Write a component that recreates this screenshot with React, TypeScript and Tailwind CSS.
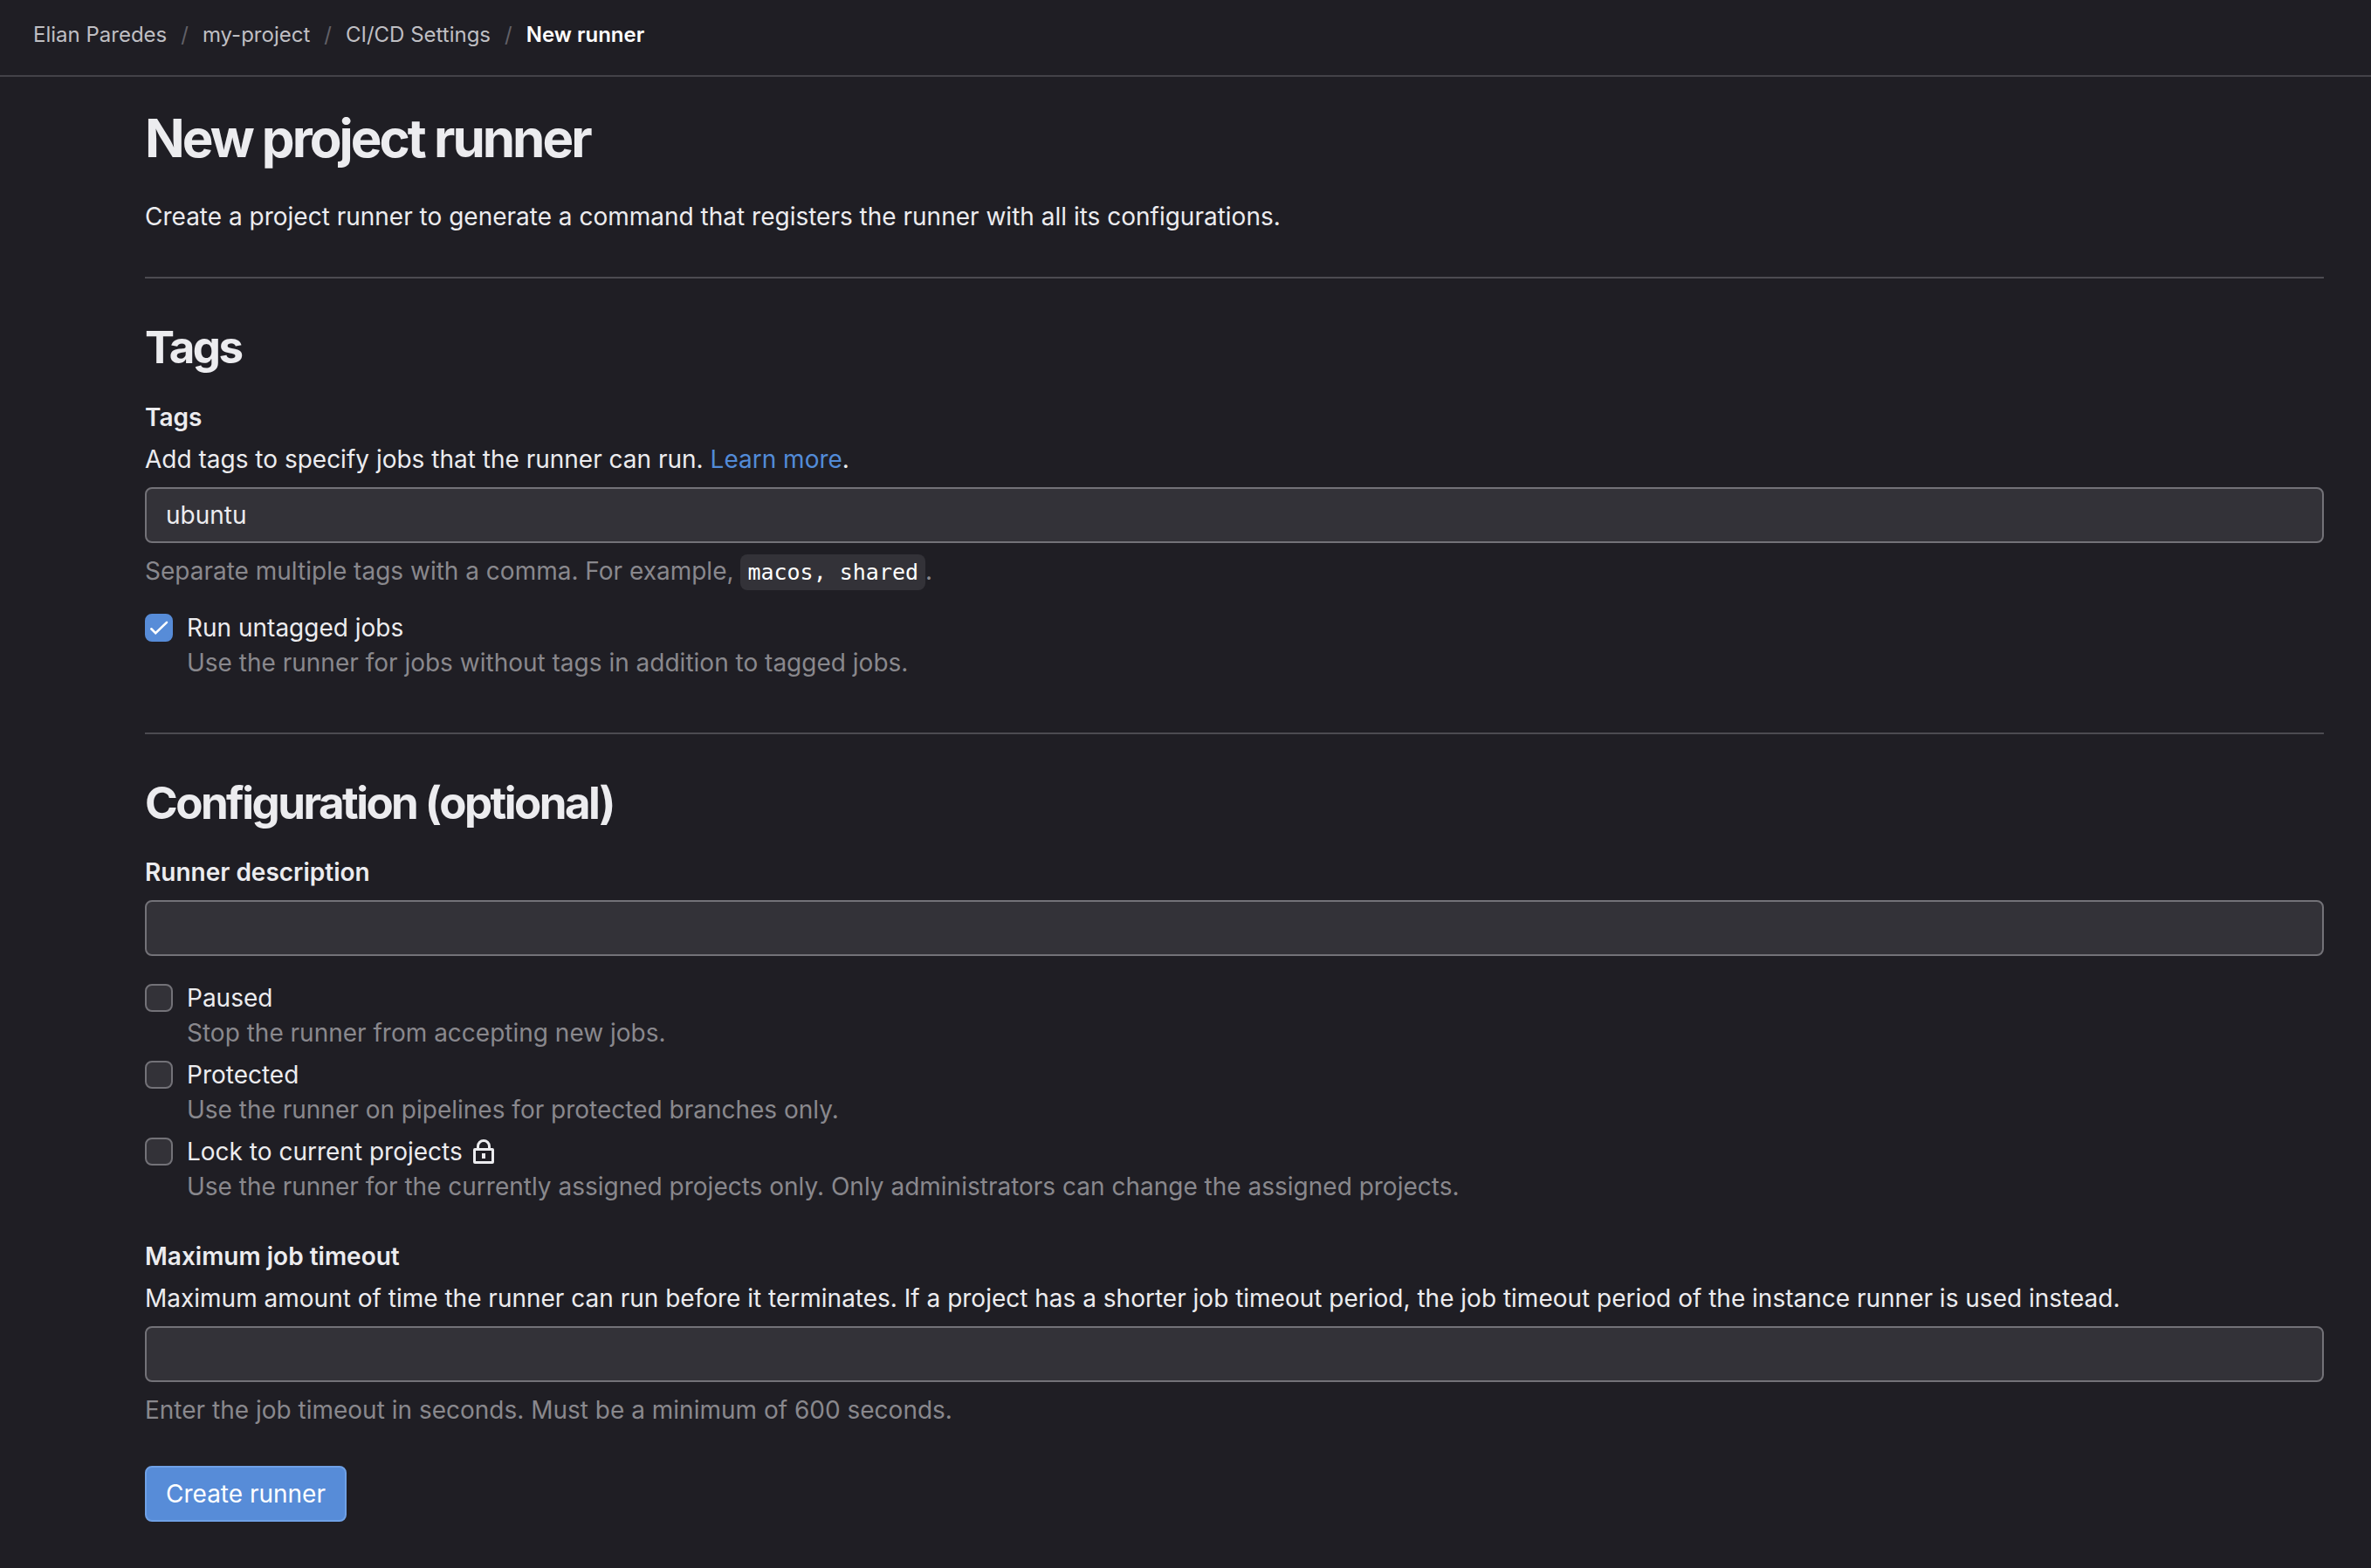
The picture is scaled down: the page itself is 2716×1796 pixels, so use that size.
import type { ReactNode } from "react";

const HINT = "text-[#89888d]";
const LABEL = "block font-semibold";
const HEADING = "text-[51px] font-bold leading-[62px] tracking-tighter";
const RULE = "border-t-2 border-[#4c4b51]";
const FIELD =
  "mt-3 block h-16 w-full rounded-lg border-2 border-[#737278] bg-[#333238] px-[22px] text-[28px] text-[#ececef] outline-none";

function LockIcon() {
  return (
    <svg viewBox="0 0 16 16" className="size-8" fill="none" stroke="currentColor" strokeWidth="1.5" aria-hidden="true">
      <path d="M4.75 6V5a3.25 3.25 0 0 1 6.5 0v1" />
      <rect x="2.75" y="6.75" width="10.5" height="7.5" rx="0.25" strokeLinejoin="round" />
      <rect x="7" y="9" width="2" height="3" fill="currentColor" stroke="none" />
    </svg>
  );
}

type CheckProps = {
  id: string;
  label: string;
  hint: string;
  checked?: boolean;
  icon?: ReactNode;
};

function Check({ id, label, hint, checked, icon }: CheckProps) {
  return (
    <div className="flex gap-4">
      <span className="relative mt-1 block size-8 shrink-0">
        <input
          id={id}
          type="checkbox"
          defaultChecked={checked}
          aria-describedby={`${id}-hint`}
          className="peer block size-8 appearance-none rounded-lg border-2 border-[#737278] bg-[#333238] checked:border-[#578cd8] checked:bg-[#578cd8]"
        />
        <svg
          viewBox="0 0 32 32"
          className="pointer-events-none absolute inset-0 hidden size-8 peer-checked:block"
          fill="none"
          stroke="#fff"
          strokeWidth="2.6"
          strokeLinecap="round"
          aria-hidden="true"
        >
          <path d="M7.3 17.3l4.9 4.8L25 9.9" />
        </svg>
      </span>
      <div>
        <label htmlFor={id} className="flex items-center gap-2">
          {label}
          {icon}
        </label>
        <p id={`${id}-hint`} className={HINT}>{hint}</p>
      </div>
    </div>
  );
}

function Breadcrumb() {
  const parents = ["Elian Paredes", "my-project", "CI/CD Settings"];
  return (
    <nav
      aria-label="Breadcrumb"
      className="flex h-[88px] items-center border-b-2 border-[#434248] px-[38px] pb-1.5 text-2xl text-[#bfbfc3]"
    >
      <ol className="flex">
        {parents.map((name) => (
          <li key={name} className="flex">
            <a href="#">{name}</a>
            <span aria-hidden="true" className="px-4 text-[#626168]">/</span>
          </li>
        ))}
        <li>
          <a href="#" aria-current="page" className="font-semibold text-white">New runner</a>
        </li>
      </ol>
    </nav>
  );
}

export default function App() {
  return (
    <div className="min-h-screen bg-[#1f1e24] font-['Inter',sans-serif] text-[28px] leading-10 text-[#ececef]">
      <Breadcrumb />
      <main className="pt-8 pr-[54px] pb-12 pl-[166px]">
        <h1 className="text-[60px] font-bold leading-[76px] tracking-tighter">New project runner</h1>
        <p className="mt-8">
          Create a project runner to generate a command that registers the runner with all its configurations.
        </p>

        <form onSubmit={(event) => event.preventDefault()}>
          <hr className={`mt-[49px] mb-12 ${RULE}`} />

          <section>
            <h2 className={HEADING}>Tags</h2>
            <label htmlFor="tags" className={`mt-[29px] ${LABEL}`}>Tags</label>
            <p className="mt-2">
              Add tags to specify jobs that the runner can run.{" "}
              <a href="#" className="text-[#528bd8]">Learn more</a>.
            </p>
            <input id="tags" type="text" className={FIELD} defaultValue="ubuntu" />
            <p className={`mt-3 mb-[25px] ${HINT}`}>
              Separate multiple tags with a comma. For example,{" "}
              <code className="rounded-lg bg-[#333238] px-2 py-1.5 font-['DejaVu_Sans_Mono',monospace] text-[25px] leading-none text-white">
                macos, shared
              </code>
              .
            </p>
            <Check
              id="run-untagged"
              label="Run untagged jobs"
              hint="Use the runner for jobs without tags in addition to tagged jobs."
              checked
            />
          </section>

          <hr className={`mt-[60px] mb-12 ${RULE}`} />

          <section>
            <h2 className={HEADING}>Configuration (optional)</h2>
            <label htmlFor="description" className={`mt-7 ${LABEL}`}>Runner description</label>
            <input id="description" type="text" className={FIELD} />
            <div className="mt-7 mb-10 flex flex-col gap-2">
              <Check id="paused" label="Paused" hint="Stop the runner from accepting new jobs." />
              <Check
                id="protected"
                label="Protected"
                hint="Use the runner on pipelines for protected branches only."
              />
              <Check
                id="locked"
                label="Lock to current projects"
                hint="Use the runner for the currently assigned projects only. Only administrators can change the assigned projects."
                icon={<LockIcon />}
              />
            </div>
            <label htmlFor="timeout" className={LABEL}>Maximum job timeout</label>
            <p className="mt-2">
              Maximum amount of time the runner can run before it terminates. If a project has a shorter job timeout
              period, the job timeout period of the instance runner is used instead.
            </p>
            <input id="timeout" type="text" className={FIELD} />
            <p className={`mt-3 ${HINT}`}>Enter the job timeout in seconds. Must be a minimum of 600 seconds.</p>
          </section>

          <button
            type="submit"
            className="mt-11 block h-16 rounded-lg border-2 border-[#6fa1e6] bg-[#578cd8] px-[22px] text-white"
          >
            Create runner
          </button>
        </form>
      </main>
    </div>
  );
}
